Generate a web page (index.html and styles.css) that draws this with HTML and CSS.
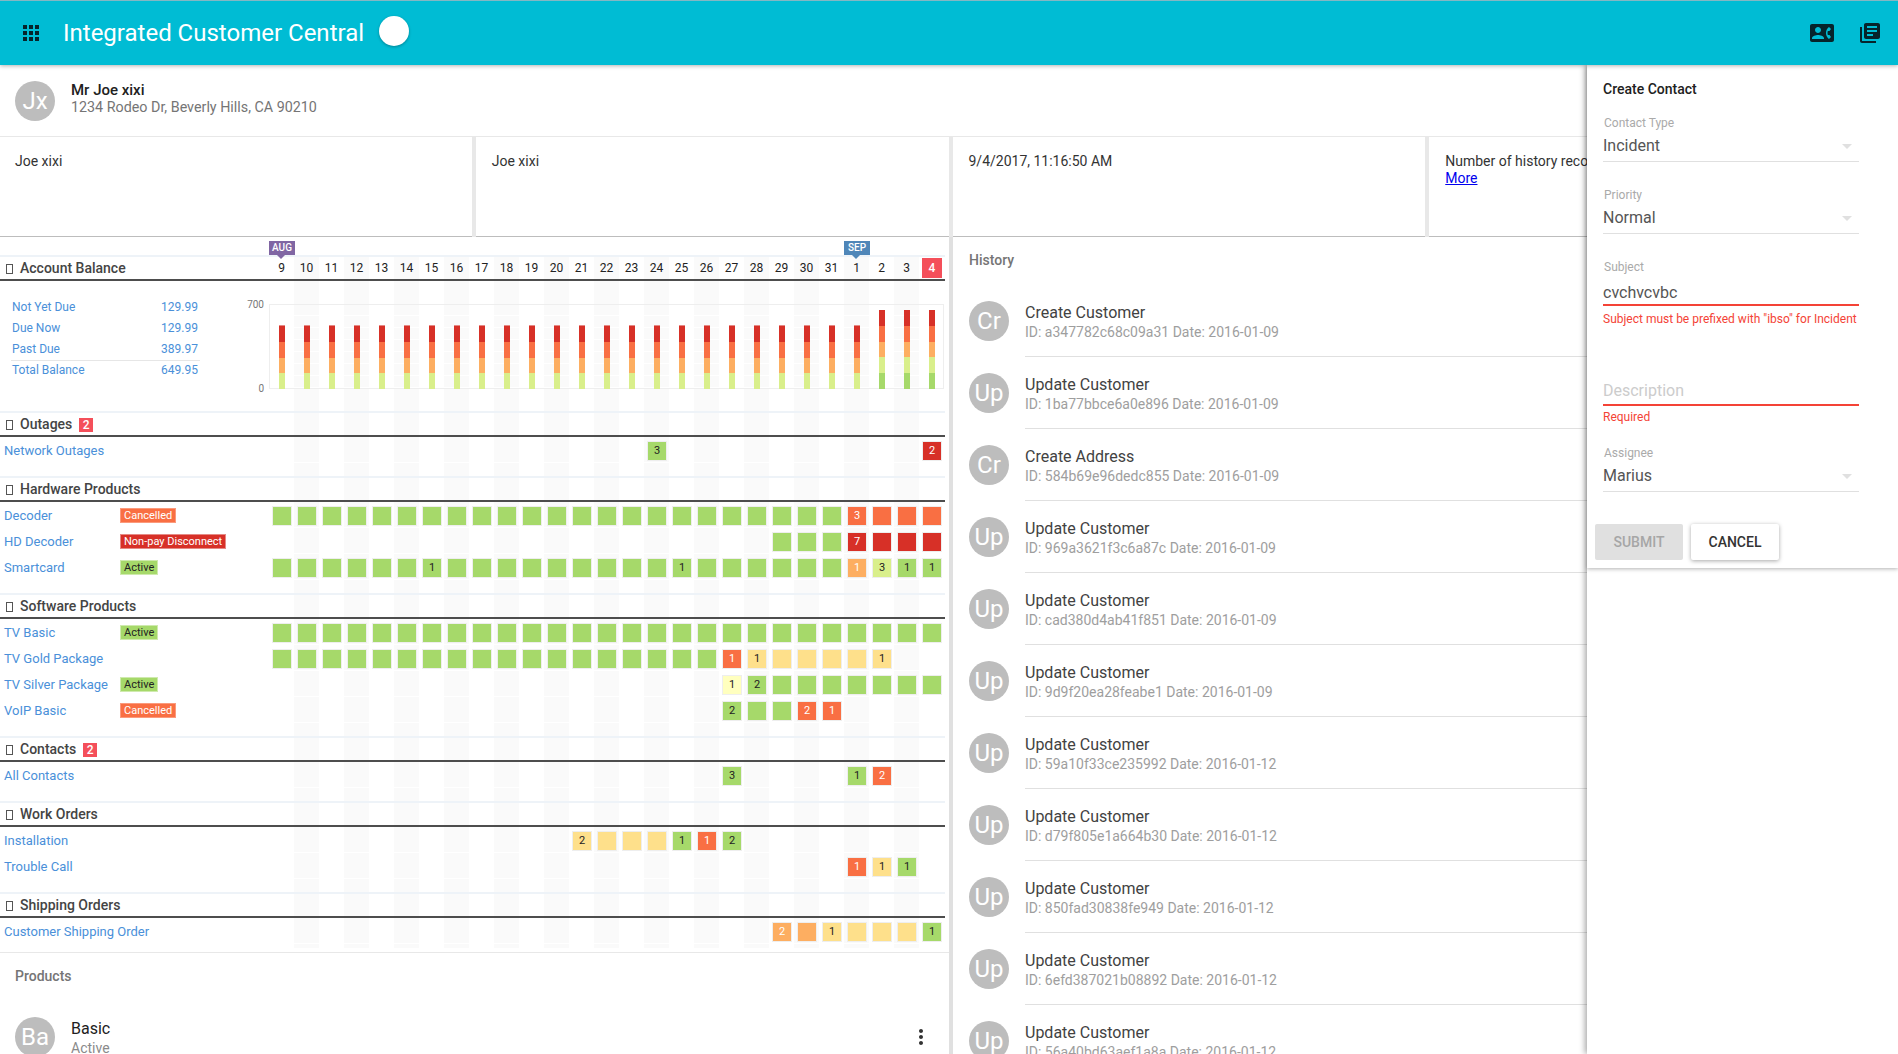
FILE: index.html
```html
<!DOCTYPE html>
<html lang="en">
<head>
<meta charset="utf-8">
<title>Integrated Customer Central</title>
<link rel="stylesheet" href="styles.css">
</head>
<body>
<header class="appbar">
  <svg class="icon apps" viewBox="0 0 24 24"><path d="M4 8h4V4H4v4zm6 12h4v-4h-4v4zm-6 0h4v-4H4v4zm0-6h4v-4H4v4zm6 0h4v-4h-4v4zm6-10v4h4V4h-4zm-6 4h4V4h-4v4zm6 6h4v-4h-4v4zm0 6h4v-4h-4v4z"/></svg>
  <h1 class="apptitle">Integrated Customer Central</h1>
  <span class="dot"></span>
  <div class="appactions">
    <svg class="icon" viewBox="0 0 24 24"><path d="M22 3H2C.9 3 0 3.9 0 5v14c0 1.1.9 2 2 2h20c1.1 0 1.99-.9 1.99-2L24 5c0-1.1-.9-2-2-2zM8 6c1.66 0 3 1.34 3 3s-1.34 3-3 3-3-1.34-3-3 1.34-3 3-3zm6 12H2v-1c0-2 4-3.1 6-3.1s6 1.1 6 3.1v1zm3.85-4h1.64L21 16l-1.99 1.99c-1.31-.98-2.28-2.38-2.73-3.99-.18-.64-.28-1.31-.28-2s.1-1.36.28-2c.45-1.62 1.42-3.01 2.73-3.99L21 8l-1.51 2h-1.64c-.22.63-.35 1.3-.35 2s.13 1.37.35 2z"/></svg>
    <svg class="icon" viewBox="0 0 24 24"><path d="M4 6H2v14c0 1.1.9 2 2 2h14v-2H4V6zm16-4H8c-1.1 0-2 .9-2 2v12c0 1.1.9 2 2 2h12c1.1 0 2-.9 2-2V4c0-1.1-.9-2-2-2zm-1 9H9V9h10v2zm-4 4H9v-2h6v2zm4-8H9V5h10v2z"/></svg>
  </div>
</header>

<section class="customer">
  <span class="avatar">Jx</span>
  <div class="customer-text">
    <div class="customer-name">Mr Joe xixi</div>
    <div class="customer-addr">1234 Rodeo Dr, Beverly Hills, CA 90210</div>
  </div>
</section>

<section class="cards">
  <div class="card">Joe xixi</div>
  <div class="card">Joe xixi</div>
  <div class="card">9/4/2017, 11:16:50 AM</div>
  <div class="card">Number of history records: 11<br><a href="#">More</a></div>
</section>

<main class="main">
  <div class="leftcol">
    <div class="timeline">
      <div class="bands"><b></b><b></b><b></b><b></b><b></b><b></b><b></b><b></b><b></b><b></b><b></b><b></b><b></b><b></b><b></b><b></b><b></b><b></b><b></b><b></b><b></b><b></b><b></b><b></b><b></b><b></b><b></b></div>
      <span class="flag flag-aug">AUG</span>
      <span class="flag flag-sep">SEP</span>

      <section class="sec sec-balance">
        <div class="head">
          <div class="head-title"><span class="tofu"></span>Account Balance</div>
          <div class="dates"><span>9</span><span>10</span><span>11</span><span>12</span><span>13</span><span>14</span><span>15</span><span>16</span><span>17</span><span>18</span><span>19</span><span>20</span><span>21</span><span>22</span><span>23</span><span>24</span><span>25</span><span>26</span><span>27</span><span>28</span><span>29</span><span>30</span><span>31</span><span>1</span><span>2</span><span>3</span><span class="today">4</span></div>
        </div>
        <div class="balance">
          <div class="baltable">
            <div class="balrow"><span>Not Yet Due</span><span>129.99</span></div>
            <div class="balrow"><span>Due Now</span><span>129.99</span></div>
            <div class="balrow"><span>Past Due</span><span>389.97</span></div>
            <div class="balrow baltotal"><span>Total Balance</span><span>649.95</span></div>
          </div>
          <div class="axis"><span>700</span><span>0</span></div>
          <div class="plot">
            <div class="bar"><span class="s-d"></span><span class="s-r"></span><span class="s-o"></span><span class="s-l"></span></div>
            <div class="bar"><span class="s-d"></span><span class="s-r"></span><span class="s-o"></span><span class="s-l"></span></div>
            <div class="bar"><span class="s-d"></span><span class="s-r"></span><span class="s-o"></span><span class="s-l"></span></div>
            <div class="bar"><span class="s-d"></span><span class="s-r"></span><span class="s-o"></span><span class="s-l"></span></div>
            <div class="bar"><span class="s-d"></span><span class="s-r"></span><span class="s-o"></span><span class="s-l"></span></div>
            <div class="bar"><span class="s-d"></span><span class="s-r"></span><span class="s-o"></span><span class="s-l"></span></div>
            <div class="bar"><span class="s-d"></span><span class="s-r"></span><span class="s-o"></span><span class="s-l"></span></div>
            <div class="bar"><span class="s-d"></span><span class="s-r"></span><span class="s-o"></span><span class="s-l"></span></div>
            <div class="bar"><span class="s-d"></span><span class="s-r"></span><span class="s-o"></span><span class="s-l"></span></div>
            <div class="bar"><span class="s-d"></span><span class="s-r"></span><span class="s-o"></span><span class="s-l"></span></div>
            <div class="bar"><span class="s-d"></span><span class="s-r"></span><span class="s-o"></span><span class="s-l"></span></div>
            <div class="bar"><span class="s-d"></span><span class="s-r"></span><span class="s-o"></span><span class="s-l"></span></div>
            <div class="bar"><span class="s-d"></span><span class="s-r"></span><span class="s-o"></span><span class="s-l"></span></div>
            <div class="bar"><span class="s-d"></span><span class="s-r"></span><span class="s-o"></span><span class="s-l"></span></div>
            <div class="bar"><span class="s-d"></span><span class="s-r"></span><span class="s-o"></span><span class="s-l"></span></div>
            <div class="bar"><span class="s-d"></span><span class="s-r"></span><span class="s-o"></span><span class="s-l"></span></div>
            <div class="bar"><span class="s-d"></span><span class="s-r"></span><span class="s-o"></span><span class="s-l"></span></div>
            <div class="bar"><span class="s-d"></span><span class="s-r"></span><span class="s-o"></span><span class="s-l"></span></div>
            <div class="bar"><span class="s-d"></span><span class="s-r"></span><span class="s-o"></span><span class="s-l"></span></div>
            <div class="bar"><span class="s-d"></span><span class="s-r"></span><span class="s-o"></span><span class="s-l"></span></div>
            <div class="bar"><span class="s-d"></span><span class="s-r"></span><span class="s-o"></span><span class="s-l"></span></div>
            <div class="bar"><span class="s-d"></span><span class="s-r"></span><span class="s-o"></span><span class="s-l"></span></div>
            <div class="bar"><span class="s-d"></span><span class="s-r"></span><span class="s-o"></span><span class="s-l"></span></div>
            <div class="bar"><span class="s-d"></span><span class="s-r"></span><span class="s-o"></span><span class="s-l"></span></div>
            <div class="bar tall"><span class="s-d"></span><span class="s-r"></span><span class="s-o"></span><span class="s-l"></span><span class="s-g"></span></div>
            <div class="bar tall"><span class="s-d"></span><span class="s-r"></span><span class="s-o"></span><span class="s-l"></span><span class="s-g"></span></div>
            <div class="bar tall"><span class="s-d"></span><span class="s-r"></span><span class="s-o"></span><span class="s-l"></span><span class="s-g"></span></div>
          </div>
        </div>
      </section>

      <section class="sec">
        <div class="head"><div class="head-title"><span class="tofu"></span>Outages<span class="badge">2</span></div></div>
        <div class="row"><div class="rlabel">Network Outages</div><div class="rstatus"></div><div class="days"><i></i><i></i><i></i><i></i><i></i><i></i><i></i><i></i><i></i><i></i><i></i><i></i><i></i><i></i><i></i><i class="g">3</i><i></i><i></i><i></i><i></i><i></i><i></i><i></i><i></i><i></i><i></i><i class="d">2</i></div></div>
      </section>

      <section class="sec">
        <div class="head"><div class="head-title"><span class="tofu"></span>Hardware Products</div></div>
        <div class="row"><div class="rlabel">Decoder</div><div class="rstatus"><span class="chip chip-r">Cancelled</span></div><div class="days"><i class="g"></i><i class="g"></i><i class="g"></i><i class="g"></i><i class="g"></i><i class="g"></i><i class="g"></i><i class="g"></i><i class="g"></i><i class="g"></i><i class="g"></i><i class="g"></i><i class="g"></i><i class="g"></i><i class="g"></i><i class="g"></i><i class="g"></i><i class="g"></i><i class="g"></i><i class="g"></i><i class="g"></i><i class="g"></i><i class="g"></i><i class="r">3</i><i class="r"></i><i class="r"></i><i class="r"></i></div></div>
        <div class="row"><div class="rlabel">HD Decoder</div><div class="rstatus"><span class="chip chip-d">Non-pay Disconnect</span></div><div class="days"><i></i><i></i><i></i><i></i><i></i><i></i><i></i><i></i><i></i><i></i><i></i><i></i><i></i><i></i><i></i><i></i><i></i><i></i><i></i><i></i><i class="g"></i><i class="g"></i><i class="g"></i><i class="d">7</i><i class="d"></i><i class="d"></i><i class="d"></i></div></div>
        <div class="row"><div class="rlabel">Smartcard</div><div class="rstatus"><span class="chip chip-g">Active</span></div><div class="days"><i class="g"></i><i class="g"></i><i class="g"></i><i class="g"></i><i class="g"></i><i class="g"></i><i class="g">1</i><i class="g"></i><i class="g"></i><i class="g"></i><i class="g"></i><i class="g"></i><i class="g"></i><i class="g"></i><i class="g"></i><i class="g"></i><i class="g">1</i><i class="g"></i><i class="g"></i><i class="g"></i><i class="g"></i><i class="g"></i><i class="g"></i><i class="o">1</i><i class="l">3</i><i class="g">1</i><i class="g">1</i></div></div>
      </section>

      <section class="sec">
        <div class="head"><div class="head-title"><span class="tofu"></span>Software Products</div></div>
        <div class="row"><div class="rlabel">TV Basic</div><div class="rstatus"><span class="chip chip-g">Active</span></div><div class="days"><i class="g"></i><i class="g"></i><i class="g"></i><i class="g"></i><i class="g"></i><i class="g"></i><i class="g"></i><i class="g"></i><i class="g"></i><i class="g"></i><i class="g"></i><i class="g"></i><i class="g"></i><i class="g"></i><i class="g"></i><i class="g"></i><i class="g"></i><i class="g"></i><i class="g"></i><i class="g"></i><i class="g"></i><i class="g"></i><i class="g"></i><i class="g"></i><i class="g"></i><i class="g"></i><i class="g"></i></div></div>
        <div class="row"><div class="rlabel">TV Gold Package</div><div class="rstatus"></div><div class="days"><i class="g"></i><i class="g"></i><i class="g"></i><i class="g"></i><i class="g"></i><i class="g"></i><i class="g"></i><i class="g"></i><i class="g"></i><i class="g"></i><i class="g"></i><i class="g"></i><i class="g"></i><i class="g"></i><i class="g"></i><i class="g"></i><i class="g"></i><i class="g"></i><i class="r">1</i><i class="y">1</i><i class="y"></i><i class="y"></i><i class="y"></i><i class="y"></i><i class="y">1</i><i></i><i></i></div></div>
        <div class="row"><div class="rlabel">TV Silver Package</div><div class="rstatus"><span class="chip chip-g">Active</span></div><div class="days"><i></i><i></i><i></i><i></i><i></i><i></i><i></i><i></i><i></i><i></i><i></i><i></i><i></i><i></i><i></i><i></i><i></i><i></i><i class="p">1</i><i class="g">2</i><i class="g"></i><i class="g"></i><i class="g"></i><i class="g"></i><i class="g"></i><i class="g"></i><i class="g"></i></div></div>
        <div class="row"><div class="rlabel">VoIP Basic</div><div class="rstatus"><span class="chip chip-r">Cancelled</span></div><div class="days"><i></i><i></i><i></i><i></i><i></i><i></i><i></i><i></i><i></i><i></i><i></i><i></i><i></i><i></i><i></i><i></i><i></i><i></i><i class="g">2</i><i class="g"></i><i class="g"></i><i class="r">2</i><i class="r">1</i><i></i><i></i><i></i><i></i></div></div>
      </section>

      <section class="sec">
        <div class="head"><div class="head-title"><span class="tofu"></span>Contacts<span class="badge">2</span></div></div>
        <div class="row"><div class="rlabel">All Contacts</div><div class="rstatus"></div><div class="days"><i></i><i></i><i></i><i></i><i></i><i></i><i></i><i></i><i></i><i></i><i></i><i></i><i></i><i></i><i></i><i></i><i></i><i></i><i class="g">3</i><i></i><i></i><i></i><i></i><i class="g">1</i><i class="r">2</i><i></i><i></i></div></div>
      </section>

      <section class="sec">
        <div class="head"><div class="head-title"><span class="tofu"></span>Work Orders</div></div>
        <div class="row"><div class="rlabel">Installation</div><div class="rstatus"></div><div class="days"><i></i><i></i><i></i><i></i><i></i><i></i><i></i><i></i><i></i><i></i><i></i><i></i><i class="y">2</i><i class="y"></i><i class="y"></i><i class="y"></i><i class="g">1</i><i class="r">1</i><i class="g">2</i><i></i><i></i><i></i><i></i><i></i><i></i><i></i><i></i></div></div>
        <div class="row"><div class="rlabel">Trouble Call</div><div class="rstatus"></div><div class="days"><i></i><i></i><i></i><i></i><i></i><i></i><i></i><i></i><i></i><i></i><i></i><i></i><i></i><i></i><i></i><i></i><i></i><i></i><i></i><i></i><i></i><i></i><i></i><i class="r">1</i><i class="y">1</i><i class="g">1</i><i></i></div></div>
      </section>

      <section class="sec sec-last">
        <div class="head"><div class="head-title"><span class="tofu"></span>Shipping Orders</div></div>
        <div class="row"><div class="rlabel">Customer Shipping Order</div><div class="rstatus"></div><div class="days"><i></i><i></i><i></i><i></i><i></i><i></i><i></i><i></i><i></i><i></i><i></i><i></i><i></i><i></i><i></i><i></i><i></i><i></i><i></i><i></i><i class="o">2</i><i class="o"></i><i class="y">1</i><i class="y"></i><i class="y"></i><i class="y"></i><i class="g">1</i></div></div>
      </section>
    </div>

    <section class="products">
      <h2 class="subhead">Products</h2>
      <div class="product">
        <span class="avatar">Ba</span>
        <div class="item-text">
          <div class="primary primary-dark">Basic</div>
          <div class="secondary secondary-mid">Active</div>
        </div>
        <svg class="kebab" viewBox="0 0 24 24"><path d="M12 8c1.1 0 2-.9 2-2s-.9-2-2-2-2 .9-2 2 .9 2 2 2zm0 2c-1.1 0-2 .9-2 2s.9 2 2 2 2-.9 2-2-.9-2-2-2zm0 6c-1.1 0-2 .9-2 2s.9 2 2 2 2-.9 2-2-.9-2-2-2z"/></svg>
      </div>
    </section>
  </div>

  <div class="history">
    <h2 class="subhead">History</h2>
    <div class="hitem"><span class="avatar">Cr</span><div class="item-text"><div class="primary">Create Customer</div><div class="secondary">ID: a347782c68c09a31 Date: 2016-01-09</div></div></div>
    <div class="hitem"><span class="avatar">Up</span><div class="item-text"><div class="primary">Update Customer</div><div class="secondary">ID: 1ba77bbce6a0e896 Date: 2016-01-09</div></div></div>
    <div class="hitem"><span class="avatar">Cr</span><div class="item-text"><div class="primary">Create Address</div><div class="secondary">ID: 584b69e96dedc855 Date: 2016-01-09</div></div></div>
    <div class="hitem"><span class="avatar">Up</span><div class="item-text"><div class="primary">Update Customer</div><div class="secondary">ID: 969a3621f3c6a87c Date: 2016-01-09</div></div></div>
    <div class="hitem"><span class="avatar">Up</span><div class="item-text"><div class="primary">Update Customer</div><div class="secondary">ID: cad380d4ab41f851 Date: 2016-01-09</div></div></div>
    <div class="hitem"><span class="avatar">Up</span><div class="item-text"><div class="primary">Update Customer</div><div class="secondary">ID: 9d9f20ea28feabe1 Date: 2016-01-09</div></div></div>
    <div class="hitem"><span class="avatar">Up</span><div class="item-text"><div class="primary">Update Customer</div><div class="secondary">ID: 59a10f33ce235992 Date: 2016-01-12</div></div></div>
    <div class="hitem"><span class="avatar">Up</span><div class="item-text"><div class="primary">Update Customer</div><div class="secondary">ID: d79f805e1a664b30 Date: 2016-01-12</div></div></div>
    <div class="hitem"><span class="avatar">Up</span><div class="item-text"><div class="primary">Update Customer</div><div class="secondary">ID: 850fad30838fe949 Date: 2016-01-12</div></div></div>
    <div class="hitem"><span class="avatar">Up</span><div class="item-text"><div class="primary">Update Customer</div><div class="secondary">ID: 6efd387021b08892 Date: 2016-01-12</div></div></div>
    <div class="hitem"><span class="avatar">Up</span><div class="item-text"><div class="primary">Update Customer</div><div class="secondary">ID: 56a40bd63aef1a8a Date: 2016-01-12</div></div></div>
  </div>
</main>

<aside class="drawer">
  <form class="cform">
    <div class="cform-title">Create Contact</div>
    <div class="field field-select">
      <div class="flabel">Contact Type</div>
      <div class="fvalue">Incident</div>
    </div>
    <div class="field field-select">
      <div class="flabel">Priority</div>
      <div class="fvalue">Normal</div>
    </div>
    <div class="field field-error field-subject">
      <div class="flabel">Subject</div>
      <div class="fvalue">cvchvcvbc</div>
    </div>
    <div class="ferror ferror-subject">Subject must be prefixed with "ibso" for Incident</div>
    <div class="field field-error field-desc">
      <div class="fvalue fplaceholder">Description</div>
    </div>
    <div class="ferror">Required</div>
    <div class="field field-select field-assignee">
      <div class="flabel">Assignee</div>
      <div class="fvalue">Marius</div>
    </div>
    <div class="actions">
      <span class="btn btn-off">SUBMIT</span>
      <span class="btn btn-raised">CANCEL</span>
    </div>
  </form>
</aside>
</body>
</html>
```
FILE: styles.css
```css
* { box-sizing: border-box; }
html, body { margin: 0; height: 1054px; overflow: hidden; }
body {
  position: relative;
  font-family: Roboto, "Liberation Sans", sans-serif;
  font-size: 14px;
  line-height: 17px;
  color: #212121;
  background: #fff;
}
h1, h2 { margin: 0; font-weight: 500; }

/* app bar */
.appbar {
  position: relative;
  z-index: 3;
  display: flex;
  align-items: center;
  height: 65px;
  padding: 0 16px 0 19px;
  background: #00bcd4;
  border-top: 1px solid #84b7c3;
  box-shadow: 0 1px 4px rgba(0, 0, 0, .3);
}
.icon { width: 24px; height: 24px; fill: #06242b; flex: none; }
.apptitle { margin-left: 20px; font-size: 24px; line-height: 30px; font-weight: 400; color: #fff; }
.dot {
  width: 30px; height: 30px; margin: 0 0 4px 15px;
  border-radius: 50%; background: #fff;
  box-shadow: 0 1px 3px rgba(0, 0, 0, .3);
}
.appactions { display: flex; gap: 24px; margin-left: auto; }

/* avatars */
.avatar {
  display: flex; align-items: center; justify-content: center; flex: none;
  width: 40px; height: 40px; border-radius: 50%;
  background: #bdbdbd; color: #fff; font-size: 24px; line-height: 40px;
}

/* customer */
.customer { display: flex; gap: 16px; height: 71px; padding: 16px 15px 0; }
.customer-text { margin-top: 1px; }
.customer-name { font-size: 15px; font-weight: 500; color: #212121; }
.customer-addr { font-size: 14.3px; color: #757575; }

/* cards */
.cards {
  display: flex; gap: 4px; height: 101px; padding-top: 1px; margin-left: -1px;
  background: #e8e8e8; overflow: hidden;
}
.card {
  flex: none; width: 472.75px; height: 100px; padding: 16px;
  background: #fff; border-bottom: 1px solid #bdbdbd;
  white-space: nowrap; color: #333;
}
.card a { color: #0000ee; }

/* layout */
.main { display: flex; height: 817px; overflow: hidden; }
.leftcol { flex: none; width: 949px; background: #fff; }
.history { flex: 1; padding: 15px 0 0 16px; border-left: 4px solid #e0e0e0; }
.subhead { font-size: 14px; line-height: 17px; color: #757575; margin-bottom: 16px; }

/* timeline */
.timeline { position: relative; isolation: isolate; width: 945px; padding-top: 18px; }
.bands {
  position: absolute; z-index: -1; left: 269px; top: 20px; bottom: 4px;
  display: grid; grid-template-columns: repeat(27, 25px);
}
.bands b:nth-child(even) { background: #fafafa; }
.flag {
  position: absolute; top: 4px; width: 26px; height: 14px;
  color: #fff; font-size: 10px; font-weight: 500; line-height: 14px; text-align: center;
}
.flag::after {
  content: ""; position: absolute; left: 8px; top: 14px;
  border: 4px solid transparent; border-bottom: 0; border-top-color: inherit;
}
.flag-aug { left: 269px; background: #8066a3; border-top-color: #8066a3; }
.flag-sep { left: 844px; background: #4f86b8; border-top-color: #4f86b8; }

.sec { border-top: 2px solid #eef3f8; padding-bottom: 13px; }
.sec-balance { padding-bottom: 0; }
.sec-last { padding-bottom: 8px; }
.head {
  display: flex; align-items: center; height: 24px;
  border-bottom: 2px solid #4d4d4d;
}
.head-title {
  display: flex; align-items: center; flex: none; width: 269px; padding: 1px 0 0 6px;
  font-weight: 500; color: #444;
}
.tofu { width: 7px; height: 10px; margin-right: 7px; border: 1px solid #555; }
.badge {
  width: 14px; height: 14px; margin-left: 7px;
  background: #f44f5a; color: #fff; font-size: 12px; line-height: 14px; text-align: center;
}
.dates {
  display: grid; grid-template-columns: repeat(27, 25px); align-items: center;
  font-size: 12px; color: #222; text-align: center;
}
.dates span { line-height: 20px; }
.dates .today { width: 20px; margin-left: 3px; background: #f44f5a; color: #fff; font-weight: 500; }

/* balance */
.balance { display: flex; height: 130px; }
.baltable { flex: none; width: 189px; margin: 16px 0 0 11px; font-size: 12px; color: #4a90d9; }
.balrow { display: flex; justify-content: space-between; height: 21px; padding: 0 2px 0 1px; line-height: 21px; }
.baltotal { border-top: 1px solid #e6e6e6; line-height: 19px; }
.axis {
  display: flex; flex-direction: column; justify-content: space-between; align-items: flex-end;
  flex: none; width: 69px; height: 96px; margin-top: 18px; padding-right: 5px;
  font-size: 10px; line-height: 12px; color: #777;
}
.plot {
  display: grid; grid-template-columns: repeat(27, 25px); align-items: end;
  width: 675px; height: 85px; margin-top: 23px;
  box-shadow: inset 0 0 0 1px #eeeeee;
  background: repeating-linear-gradient(to bottom, transparent 0 11px, #fff 11px 12px);
}
.bar { display: flex; flex-direction: column; width: 6px; height: 64px; margin-left: 10px; }
.bar.tall { height: 79px; }
.bar span { flex: 1; }
.s-d { background: #d73027; }
.bar:not(.tall) .s-d { border-top: 1px solid #e58a85; }
.s-r { background: #f96f43; }
.s-o { background: #fdae61; }
.s-l { background: #d9ef8b; }
.s-g { background: #a6d96a; }

/* rows */
.row { display: flex; height: 26px; font-size: 13px; }
.rlabel { flex: none; width: 120px; padding-left: 4px; line-height: 27px; color: #4a90d9; white-space: nowrap; }
.rstatus { flex: none; width: 149px; padding-top: 6px; }
.chip {
  display: block; width: fit-content; height: 15px; padding: 0 3px;
  border: 1px solid; font-size: 11px; line-height: 13px; white-space: nowrap;
}
.chip-r { background: #f96f43; border-color: #fb9a7c; color: #fff; }
.chip-d { background: #d73027; border-color: #e58a85; color: #fff; }
.chip-g { background: #a6d96a; border-color: #cfeaae; color: #222; }
.days {
  display: grid; grid-template-columns: repeat(27, 25px); width: 675px;
  border-bottom: 1px solid #fff;
}
.days i {
  display: block; height: 20px; margin: 4px 2px 1px 3px;
  font-style: normal; font-size: 11px; line-height: 18px; text-align: center;
}
.days i[class] { border: 1px solid #eeeeee; }
.g { background: #a6d96a; color: #222; }
.y { background: #fee08b; color: #222; }
.l { background: #d9ef8b; color: #222; }
.p { background: #ffffbf; color: #222; }
.o { background: #fdae61; color: #fff; }
.r { background: #f96f43; color: #fff; }
.d { background: #d73027; color: #fff; }

/* products */
.products { padding: 15px 0 0 15px; border-top: 1px solid #e8e8e8; }
.products .subhead { margin-bottom: 32px; }
.product { display: flex; gap: 16px; position: relative; }
.product .item-text { padding-top: 2px; }
.product .primary { line-height: 19px; }
.kebab { position: absolute; left: 894px; top: 8px; width: 24px; height: 24px; fill: #333; }

/* list items */
.item-text { flex: 1; min-width: 0; }
.primary { font-size: 16px; line-height: 20px; color: #424242; }
.primary-dark { color: #212121; }
.secondary { font-size: 14px; line-height: 20px; color: #9e9e9e; }
.secondary-mid { color: #8a8a8a; }
.hitem { display: flex; gap: 16px; height: 72px; padding-top: 16px; }
.hitem .item-text { margin-top: -16px; padding-top: 18px; height: 72px; border-bottom: 1px solid #e0e0e0; }
.hitem .primary { line-height: 19px; }

/* drawer */
.drawer {
  position: absolute; z-index: 2; top: 65px; right: 0; bottom: 0; width: 311px;
  background: #fff; box-shadow: -2px 0 6px rgba(0, 0, 0, .35);
}
.cform {
  height: 503px; padding: 15px 16px 0;
  background: #fff; box-shadow: 0 1px 4px rgba(0, 0, 0, .3);
}
.cform-title { margin-bottom: 18px; font-weight: 500; line-height: 18px; color: #212121; }
.field { position: relative; width: 256px; padding-bottom: 5px; margin-bottom: 26px; border-bottom: 1px solid #e0e0e0; }
.flabel { margin-left: 1px; font-size: 12px; line-height: 15px; color: #aaa; }
.fvalue { margin-top: 5px; font-size: 16px; line-height: 20px; color: #555; }
.field-select::after {
  content: ""; position: absolute; right: 7px; bottom: 12px;
  border: 5px solid transparent; border-bottom: 0; border-top-color: #e0e0e0;
}
.field-error { padding-bottom: 1px; margin-bottom: 0; border-bottom: 2px solid #f44336; }
.field-subject .fvalue { margin-top: 8px; }
.field-desc { padding-bottom: 3px; margin-top: 55px; }
.field-desc .fvalue { margin-top: 0; }
.fplaceholder { color: #ccc; }
.ferror { margin-top: 4px; font-size: 12px; line-height: 14px; color: #f44336; white-space: nowrap; }
.ferror-subject { margin-top: 6px; }
.field-assignee { margin-top: 22px; margin-bottom: 32px; }
.actions { display: flex; gap: 8px; margin-left: -8px; }
.btn {
  width: 88px; height: 36px; border-radius: 2px;
  font-weight: 500; line-height: 36px; text-align: center;
}
.btn-off { background: #e0e0e0; color: #a6a6a6; }
.btn-raised { background: #fff; color: #333; box-shadow: 0 1px 4px rgba(0, 0, 0, .35); }
```
